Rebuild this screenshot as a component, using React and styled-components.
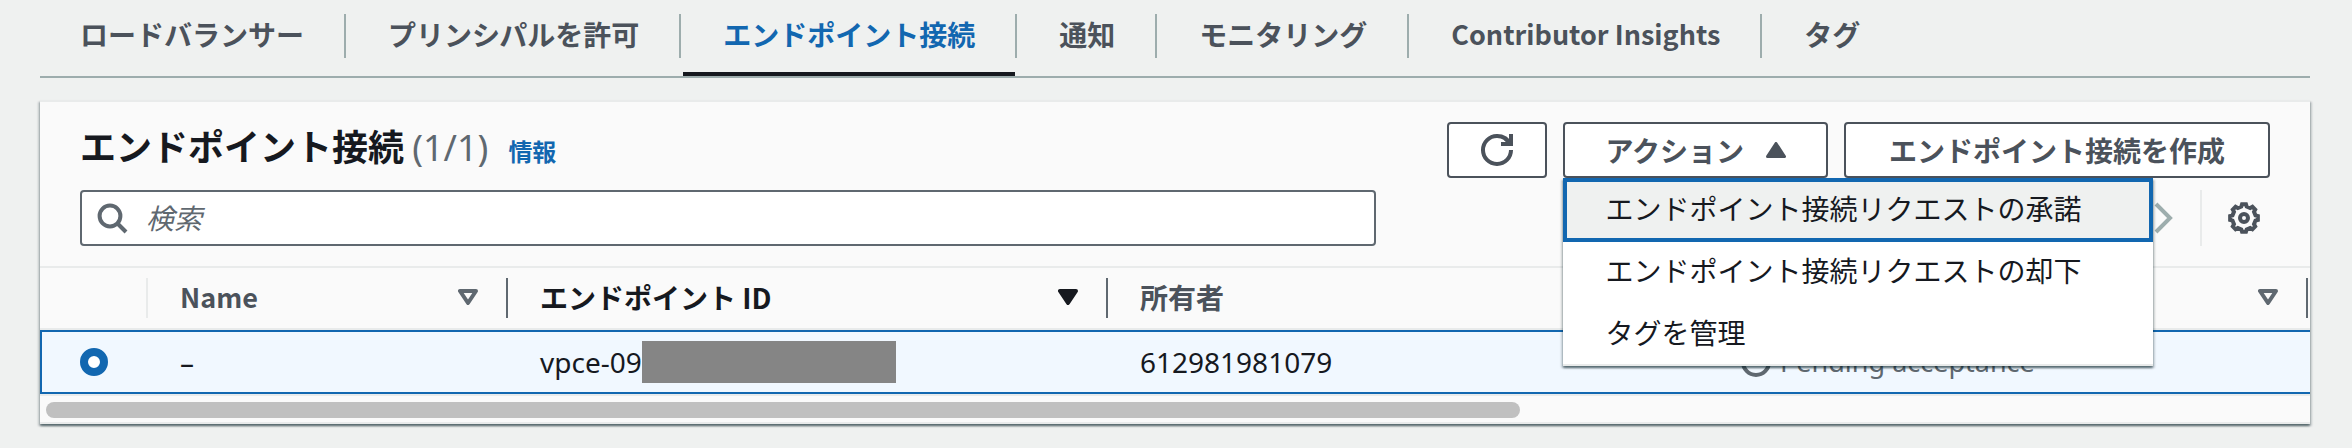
import React from "react";
import styled, { createGlobalStyle, css } from "styled-components";

const color = {
  page: "#eff1f0",
  panel: "#fafafa",
  line: "#e9ebeb",
  rule: "#9dadad",
  ink: "#16191f",
  slate: "#4b525b",
  muted: "#5f6870",
  blue: "#1267b0",
  selected: "#f1f8ff",
};

const regular = '"Noto Sans", "Noto Sans CJK JP", sans-serif';
const strong = '"Noto Sans CJK JP", "Noto Sans", sans-serif';

const GlobalStyle = createGlobalStyle`
  *, *::before, *::after { box-sizing: border-box; }
  body {
    margin: 0;
    background: ${color.page};
    color: ${color.ink};
    font: 400 28px/40px ${regular};
  }
  button, input { font: inherit; color: inherit; margin: 0; }
`;

const Page = styled.main`
  padding: 14px 42px 24px 40px;
`;

const Tabs = styled.nav`
  display: flex;
  border-bottom: 2px solid ${color.rule};
  margin-bottom: 22px;
`;

const TabCell = styled.div`
  display: flex;
  align-items: flex-start;
  &:not(:last-child)::after {
    content: "";
    width: 2px;
    height: 44px;
    margin-right: 2px;
    background: ${color.rule};
  }
`;

const Tab = styled.a`
  display: block;
  height: 62px;
  padding: 0 40px;
  font-family: ${strong};
  font-size: ${(p) => (p.$latin ? 27 : 28)}px;
  font-weight: 700;
  line-height: 40px;
  white-space: nowrap;
  text-decoration: none;
  color: ${(p) => (p.$active ? color.blue : color.slate)};
  border-bottom: 4px solid ${(p) => (p.$active ? color.ink : "transparent")};
`;

const Panel = styled.section`
  background: ${color.panel};
  border-top: 2px solid ${color.line};
  border-bottom: 2px solid ${color.line};
  box-shadow: 0 2px 2px rgba(0, 28, 36, 0.5), 2px 2px 2px rgba(0, 28, 36, 0.15),
    -2px 2px 2px rgba(0, 28, 36, 0.15);
`;

const PanelHeader = styled.header`
  display: grid;
  gap: 12px;
  padding: 20px 40px;
  border-bottom: 2px solid ${color.line};
`;

const HeaderRow = styled.div`
  display: flex;
  justify-content: space-between;
  align-items: center;
  height: 56px;
`;

const TitleGroup = styled.div`
  display: flex;
  align-items: baseline;
  gap: 20px;
  padding-bottom: 8px;
`;

const Title = styled.h2`
  margin: 0;
  font: 700 36px/48px ${strong};
`;

const Counter = styled.span`
  font-family: ${regular};
  font-weight: 400;
  color: ${color.muted};
`;

const InfoLink = styled.a`
  font: 700 24px/32px ${strong};
  color: ${color.blue};
  text-decoration: none;
`;

const Actions = styled.div`
  display: flex;
  gap: 16px;
`;

const Button = styled.button`
  display: flex;
  align-items: center;
  justify-content: center;
  gap: 22px;
  height: 56px;
  padding: 0 ${(p) => p.$pad || 40}px;
  border: 2px solid ${color.slate};
  border-radius: 4px;
  background: #fff;
  color: ${color.slate};
  font-family: ${strong};
  font-weight: 700;
  white-space: nowrap;
`;

const MenuAnchor = styled.div`
  position: relative;
`;

const Menu = styled.ul`
  position: absolute;
  z-index: 2;
  top: 100%;
  left: 0;
  margin: 0;
  padding: 0;
  list-style: none;
  background: #fff;
  border-bottom: 2px solid ${color.line};
  box-shadow: 0 2px 2px rgba(0, 28, 36, 0.5), 2px 2px 2px rgba(0, 28, 36, 0.15),
    -2px 2px 2px rgba(0, 28, 36, 0.15);
`;

const MenuItem = styled.button`
  display: block;
  width: 100%;
  height: 62px;
  padding: 0 72px 0 42px;
  border: 0;
  background: transparent;
  text-align: left;
  white-space: nowrap;
  ${(p) =>
    p.$active &&
    css`
      height: 64px;
      margin-bottom: -2px;
      padding: 0 68px 2px 38px;
      border: 4px solid ${color.blue};
      background: ${color.page};
    `}
`;

const SearchBox = styled.label`
  display: flex;
  align-items: center;
  gap: 18px;
  flex: 0 1 1296px;
  height: 56px;
  padding: 0 14px;
  border: 2px solid ${color.muted};
  border-radius: 4px;
  background: #fff;
  color: ${color.muted};
`;

const SearchInput = styled.input`
  flex: 1;
  min-width: 0;
  border: 0;
  padding: 0;
  outline: 0;
  background: transparent;
  &::placeholder {
    color: ${color.muted};
    font-style: italic;
    opacity: 1;
  }
`;

const Tools = styled.div`
  display: flex;
  align-items: center;
  height: 56px;
`;

const IconButton = styled.button`
  display: flex;
  align-items: center;
  justify-content: center;
  width: 52px;
  height: 56px;
  padding: 0;
  border: 0;
  background: transparent;
  color: ${(p) => (p.$disabled ? color.rule : color.slate)};
`;

const ToolDivider = styled.span`
  width: 2px;
  height: 56px;
  margin: 0 16px 0 10px;
  background: ${color.line};
`;

const TableWrap = styled.div`
  overflow: hidden;
  border-bottom: 2px solid ${color.line};
`;

const Table = styled.table`
  width: 154%;
  table-layout: fixed;
  border-collapse: separate;
  border-spacing: 0;
`;

const Col = styled.col`
  width: ${(p) => (p.$w ? `${p.$w}px` : "auto")};
`;

const Th = styled.th`
  padding: 10px 0;
  border-bottom: 2px solid ${color.line};
  text-align: left;
  font-family: ${strong};
  font-weight: 700;
  line-height: 36px;
  font-size: ${(p) => (p.$latin ? 27 : 28)}px;
  color: ${(p) => (p.$sorted ? color.ink : color.slate)};
`;

const ThInner = styled.div`
  display: flex;
  align-items: center;
  justify-content: space-between;
  height: 40px;
  padding: 0 28px 2px 32px;
  border-right: 2px solid ${(p) => (p.$light ? color.line : color.muted)};
`;

const Td = styled.td`
  height: 64px;
  padding: 0 32px;
  background: ${color.selected};
  border: solid ${color.blue};
  border-width: 2px 0;
  white-space: nowrap;
  &:first-child {
    padding: 0 0 0 38px;
    border-left-width: 2px;
  }
`;

const Radio = styled.input`
  appearance: none;
  display: block;
  width: 28px;
  height: 28px;
  border: 8px solid ${color.blue};
  border-radius: 50%;
  background: #fff;
`;

const Endpoint = styled.span`
  display: flex;
  align-items: center;
`;

const Status = styled.span`
  display: flex;
  align-items: center;
  gap: 8px;
  font-size: 27px;
  color: ${color.muted};
`;

const Redaction = styled.span`
  width: 254px;
  height: 42px;
  background: #858585;
`;

const ScrollTrack = styled.div`
  padding: 6px 6px 4px;
`;

const ScrollThumb = styled.div`
  width: 65.3%;
  height: 16px;
  border-radius: 8px;
  background: #c0c0c0;
`;

const Svg = ({ size = 32, sw = 2, children }) => (
  <svg width={size} height={size} viewBox="0 0 16 16" fill="none" stroke="currentColor" strokeWidth={sw} aria-hidden="true">
    {children}
  </svg>
);

const RefreshIcon = () => (
  <Svg>
    <path d="M10 5h5V0" />
    <path d="M12 2L15 5" />
    <path d="M15 8a6.957 6.957 0 0 1-7 7 6.957 6.957 0 0 1-7-7 6.957 6.957 0 0 1 7-7 6.87 6.87 0 0 1 6.3 4" />
  </Svg>
);

const SearchIcon = () => (
  <Svg>
    <circle cx="7" cy="7" r="5.2" />
    <path d="M15 15l-4.5-4.5" />
  </Svg>
);

const ChevronIcon = () => (
  <Svg>
    <path d="M4 1l7 7-7 7" />
  </Svg>
);

const gearPath = (() => {
  const points = [];
  for (let i = 0; i < 8; i += 1) {
    const mid = (i * Math.PI) / 4;
    [[-0.23, 5.9], [-0.14, 7], [0.14, 7], [0.23, 5.9]].forEach(([a, r]) => {
      points.push(`${(8 + r * Math.sin(mid + a)).toFixed(2)} ${(8 - r * Math.cos(mid + a)).toFixed(2)}`);
    });
  }
  return `M${points.join("L")}Z`;
})();

const GearIcon = () => (
  <Svg>
    <path d={gearPath} />
    <circle cx="8" cy="8" r="2" />
  </Svg>
);

const PendingIcon = () => (
  <Svg>
    <circle cx="8" cy="8" r="6.5" />
    <path d="M8 4v5h3" />
  </Svg>
);

const CaretUp = () => (
  <svg width="20" height="16" viewBox="0 0 20 16" aria-hidden="true">
    <path d="M10 1.5L18.5 14.5H1.5Z" fill="currentColor" stroke="currentColor" strokeWidth="3" strokeLinejoin="round" />
  </svg>
);

const SortIcon = ({ filled }) => (
  <svg width="20" height="16" viewBox="0 0 20 16" aria-hidden="true">
    <path
      d="M2 2H18L10 14Z"
      fill={filled ? "currentColor" : "none"}
      stroke={filled ? "currentColor" : color.muted}
      strokeWidth="4"
      strokeLinejoin="round"
    />
  </svg>
);

const tabs = [
  { label: "ロードバランサー" },
  { label: "プリンシパルを許可" },
  { label: "エンドポイント接続", active: true },
  { label: "通知" },
  { label: "モニタリング" },
  { label: "Contributor Insights", latin: true },
  { label: "タグ" },
];

const menuItems = [
  "エンドポイント接続リクエストの承諾",
  "エンドポイント接続リクエストの却下",
  "タグを管理",
];

const columns = [
  { label: "Name", latin: true },
  { label: "エンドポイント ID", sorted: true },
  { label: "所有者" },
  { label: "状態" },
];

export default function App() {
  return (
    <>
      <GlobalStyle />
      <Page>
        <Tabs>
          {tabs.map(({ label, active, latin }) => (
            <TabCell key={label}>
              <Tab href="#" $active={active} $latin={latin}>
                {label}
              </Tab>
            </TabCell>
          ))}
        </Tabs>

        <Panel>
          <PanelHeader>
            <HeaderRow>
              <TitleGroup>
                <Title>
                  エンドポイント接続 <Counter>(1/1)</Counter>
                </Title>
                <InfoLink href="#">情報</InfoLink>
              </TitleGroup>
              <Actions>
                <Button $pad={32} aria-label="更新">
                  <RefreshIcon />
                </Button>
                <MenuAnchor>
                  <Button aria-haspopup="menu" aria-expanded="true">
                    アクション
                    <CaretUp />
                  </Button>
                  <Menu>
                    {menuItems.map((label, i) => (
                      <li key={label}>
                        <MenuItem $active={i === 0}>{label}</MenuItem>
                      </li>
                    ))}
                  </Menu>
                </MenuAnchor>
                <Button $pad={43}>エンドポイント接続を作成</Button>
              </Actions>
            </HeaderRow>
            <HeaderRow>
              <SearchBox>
                <SearchIcon />
                <SearchInput type="search" placeholder="検索" aria-label="検索" />
              </SearchBox>
              <Tools>
                <IconButton $disabled aria-label="次のページ">
                  <ChevronIcon />
                </IconButton>
                <ToolDivider />
                <IconButton aria-label="設定">
                  <GearIcon />
                </IconButton>
              </Tools>
            </HeaderRow>
          </PanelHeader>

          <TableWrap>
            <Table>
              <colgroup>
                <Col $w={108} />
                <Col $w={360} />
                <Col $w={600} />
                <Col $w={600} />
                <Col $w={600} />
                <Col />
              </colgroup>
              <thead>
                <tr>
                  <Th>
                    <ThInner $light />
                  </Th>
                  {columns.map(({ label, sorted, latin }) => (
                    <Th key={label} scope="col" $sorted={sorted} $latin={latin}>
                      <ThInner>
                        {label}
                        <SortIcon filled={sorted} />
                      </ThInner>
                    </Th>
                  ))}
                  <Th />
                </tr>
              </thead>
              <tbody>
                <tr>
                  <Td>
                    <Radio type="radio" name="endpoint" defaultChecked aria-label="vpce-09" />
                  </Td>
                  <Td>–</Td>
                  <Td>
                    <Endpoint>
                      vpce-09
                      <Redaction />
                    </Endpoint>
                  </Td>
                  <Td>612981981079</Td>
                  <Td>
                    <Status>
                      <PendingIcon />
                      Pending acceptance
                    </Status>
                  </Td>
                  <Td />
                </tr>
              </tbody>
            </Table>
          </TableWrap>
          <ScrollTrack>
            <ScrollThumb />
          </ScrollTrack>
        </Panel>
      </Page>
    </>
  );
}
